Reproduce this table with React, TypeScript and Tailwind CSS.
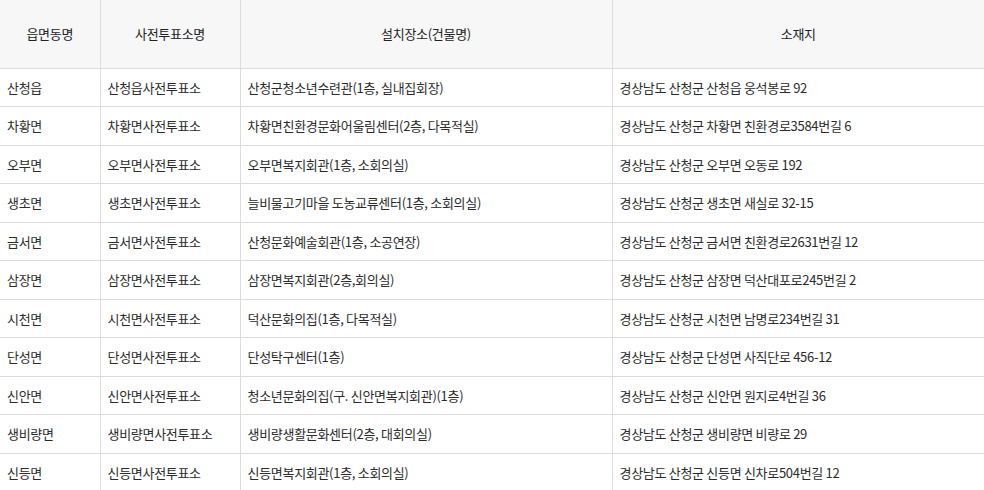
import React from 'react';

const rows: [string, string, string, string][] = [
  ['산청읍', '산청읍사전투표소', '산청군청소년수련관(1층, 실내집회장)', '경상남도 산청군 산청읍 웅석봉로 92'],
  ['차황면', '차황면사전투표소', '차황면친환경문화어울림센터(2층, 다목적실)', '경상남도 산청군 차황면 친환경로3584번길 6'],
  ['오부면', '오부면사전투표소', '오부면복지회관(1층, 소회의실)', '경상남도 산청군 오부면 오동로 192'],
  ['생초면', '생초면사전투표소', '늘비물고기마을 도농교류센터(1층, 소회의실)', '경상남도 산청군 생초면 새실로 32-15'],
  ['금서면', '금서면사전투표소', '산청문화예술회관(1층, 소공연장)', '경상남도 산청군 금서면 친환경로2631번길 12'],
  ['삼장면', '삼장면사전투표소', '삼장면복지회관(2층,회의실)', '경상남도 산청군 삼장면 덕산대포로245번길 2'],
  ['시천면', '시천면사전투표소', '덕산문화의집(1층, 다목적실)', '경상남도 산청군 시천면 남명로234번길 31'],
  ['단성면', '단성면사전투표소', '단성탁구센터(1층)', '경상남도 산청군 단성면 사직단로 456-12'],
  ['신안면', '신안면사전투표소', '청소년문화의집(구. 신안면복지회관)(1층)', '경상남도 산청군 신안면 원지로4번길 36'],
  ['생비량면', '생비량면사전투표소', '생비량생활문화센터(2층, 대회의실)', '경상남도 산청군 생비량면 비량로 29'],
  ['신등면', '신등면사전투표소', '신등면복지회관(1층, 소회의실)', '경상남도 산청군 신등면 신차로504번길 12'],
];

const headers = ['읍면동명', '사전투표소명', '설치장소(건물명)', '소재지'];

export default function App() {
  return (
    <div className="w-[984px] h-[490px] overflow-hidden bg-white font-['Noto_Sans_CJK_KR','Noto_Sans',sans-serif] text-[13px] tracking-[-0.3px] text-[#2b2b2b]">
      <table className="w-[984px] table-fixed border-collapse">
        <colgroup>
          <col className="w-[100px]" />
          <col className="w-[140px]" />
          <col className="w-[372px]" />
          <col className="w-[372px]" />
        </colgroup>
        <thead>
          <tr className="h-[68px] bg-[#f7f7f7]">
            {headers.map((h, i) => (
              <th
                key={h}
                className={`font-normal text-center text-[#222] border-b border-[#dcdcdc] ${i > 0 ? 'border-l' : ''}`}
              >
                {h}
              </th>
            ))}
          </tr>
        </thead>
        <tbody>
          {rows.map((r) => (
            <tr key={r[0]} className="h-[38.5px]">
              {r.map((c, i) => (
                <td
                  key={i}
                  className={`px-[7px] text-left whitespace-nowrap border-b border-[#dcdcdc] ${i > 0 ? 'border-l' : ''}`}
                >
                  {c}
                </td>
              ))}
            </tr>
          ))}
        </tbody>
      </table>
    </div>
  );
}
